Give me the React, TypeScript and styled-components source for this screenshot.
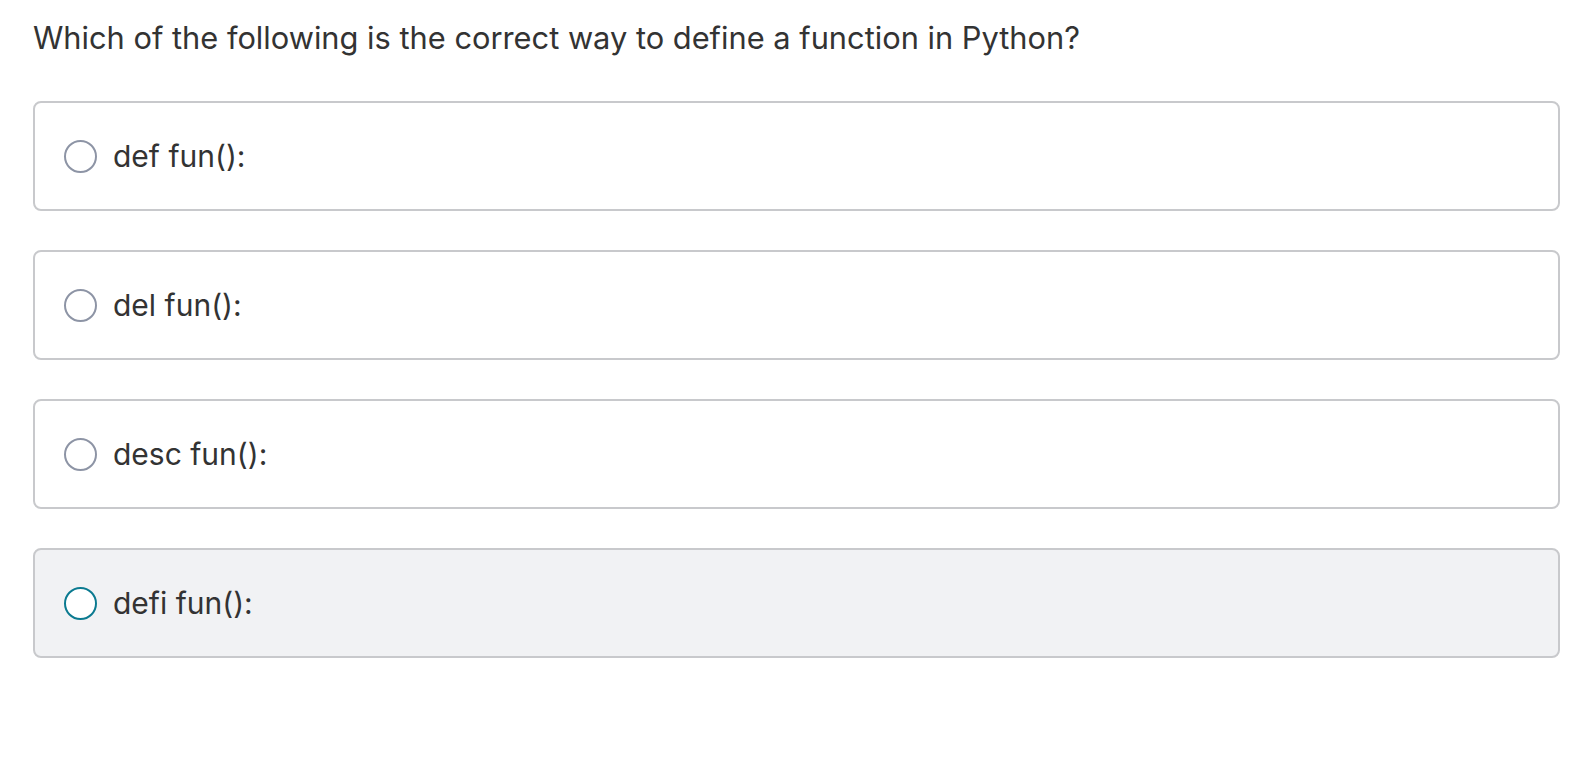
import React, { useState } from 'react';
import styled, { createGlobalStyle } from 'styled-components';

const GlobalStyle = createGlobalStyle`
  html, body {
    margin: 0;
    padding: 0;
    background: #ffffff;
  }
  body {
    font-family: Inter, "Liberation Sans", Arial, sans-serif;
    color: #333333;
  }
`;

const Page = styled.div`
  padding: 14px 36px 0 33px;
`;

const Question = styled.h2`
  margin: 0 0 39px 0;
  font-size: 30.8px;
  font-weight: 400;
  line-height: 48px;
  color: #333333;
`;

const OptionList = styled.div`
  display: flex;
  flex-direction: column;
  gap: 39px;
`;

const OptionCard = styled.label<{ $active: boolean }>`
  display: flex;
  align-items: center;
  gap: 16px;
  height: 110px;
  box-sizing: border-box;
  padding: 0 29px;
  border: 2px solid #c8c9cc;
  border-radius: 8px;
  background: ${({ $active }) => ($active ? '#f1f2f4' : '#ffffff')};
  cursor: pointer;
`;

const Radio = styled.span<{ $active: boolean }>`
  flex: none;
  width: 33px;
  height: 33px;
  box-sizing: border-box;
  border-radius: 50%;
  background: #ffffff;
  border: 2px solid ${({ $active }) => ($active ? '#0b7a90' : '#8d94a5')};
`;

const OptionText = styled.span`
  font-size: 30px;
  line-height: 36px;
  color: #333333;
`;

const options = ['def fun():', 'del fun():', 'desc fun():', 'defi fun():'];

export default function App() {
  const [hovered] = useState(3);

  return (
    <>
      <GlobalStyle />
      <Page>
        <Question>Which of the following is the correct way to define a function in Python?</Question>
        <OptionList>
          {options.map((text, index) => (
            <OptionCard key={text} $active={index === hovered}>
              <Radio $active={index === hovered} />
              <OptionText>{text}</OptionText>
            </OptionCard>
          ))}
        </OptionList>
      </Page>
    </>
  );
}
